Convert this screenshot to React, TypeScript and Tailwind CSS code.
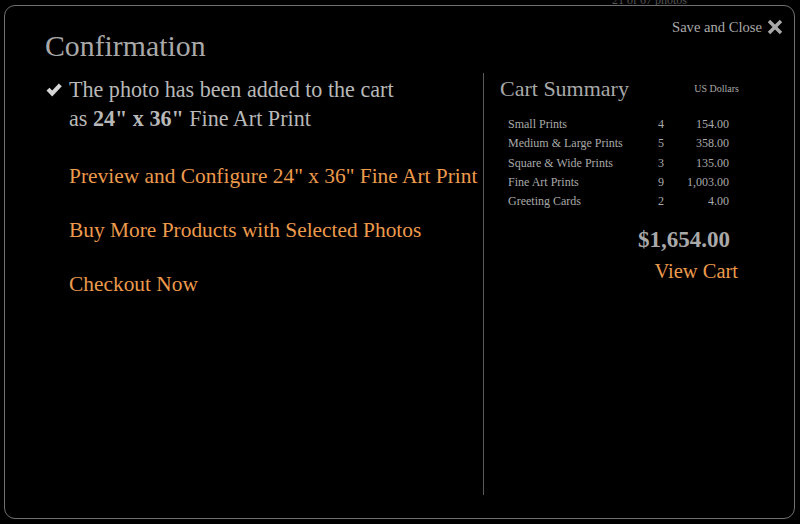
import React from "react";

const serif = { fontFamily: '"Liberation Serif", "DejaVu Serif", serif' };

const rows: [string, string, string][] = [
  ["Small Prints", "4", "154.00"],
  ["Medium & Large Prints", "5", "358.00"],
  ["Square & Wide Prints", "3", "135.00"],
  ["Fine Art Prints", "9", "1,003.00"],
  ["Greeting Cards", "2", "4.00"],
];

function Check() {
  return (
    <svg width="18" height="16" viewBox="0 0 18 16" className="shrink-0">
      <path d="M1.5 8.5 L4.5 5.8 L7.2 8.6 L13.8 1.5 L16.8 4.2 L7.2 14.5 Z" fill="#d6d6d6" />
    </svg>
  );
}

function CloseX() {
  return (
    <svg width="16" height="16" viewBox="0 0 16 16">
      <path
        d="M3.2 0.8 L8 5.6 L12.8 0.8 L15.2 3.2 L10.4 8 L15.2 12.8 L12.8 15.2 L8 10.4 L3.2 15.2 L0.8 12.8 L5.6 8 L0.8 3.2 Z"
        fill="#a8a8a8"
      />
    </svg>
  );
}

export default function App() {
  return (
    <div className="relative w-[800px] h-[524px] bg-black overflow-hidden" style={serif}>
      <div className="absolute left-[612px] top-[-9px] text-[12px] text-[#555]">21 of 67 photos</div>
      <div className="relative ml-[4px] mt-[5px] w-[791px] h-[514px] rounded-[11px] border border-[#707070] bg-black flex flex-col">
        <div className="flex justify-between items-start h-[67px]">
          <div className="ml-[40px] mt-[24px] text-[29.8px] leading-[32px] text-[#a9a9a9]">Confirmation</div>
          <div className="flex items-center gap-[5px] mt-[12px] mr-[11px]">
            <span className="text-[14.6px] leading-[18px] text-[#a9a9a9]">Save and Close</span>
            <CloseX />
          </div>
        </div>
        <div className="flex h-[422px]">
          <div className="w-[478px] pl-[40px] pt-[2px]">
            <div className="flex items-start gap-[6px]">
              <div className="mt-[7px]">
                <Check />
              </div>
              <div className="text-[22.1px] leading-[29px] text-[#b8b8b8]">
                <div>The photo has been added to the cart</div>
                <div>
                  as <span className="font-bold">24" x 36"</span> Fine Art Print
                </div>
              </div>
            </div>
            <div className="pl-[24px] mt-[29px] flex flex-col gap-[25px] text-[21.4px] leading-[29px] text-[#ec9a4c] whitespace-nowrap">
              <a>Preview and Configure 24" x 36" Fine Art Print</a>
              <a>Buy More Products with Selected Photos</a>
              <a>Checkout Now</a>
            </div>
          </div>
          <div className="border-l border-[#5a5a5a] pl-[16px] pt-[1px] w-[256px]">
            <div className="flex justify-between items-center h-[28px]">
              <span className="text-[22px] text-[#a9a9a9]">Cart Summary</span>
              <span className="text-[10px] text-[#a9a9a9]">US Dollars</span>
            </div>
            <div className="mt-[13px] pl-[8px] pr-[10px] text-[12px] leading-[19.3px] text-[#a9a9a9]">
              {rows.map(([l, q, a]) => (
                <div key={l} className="flex">
                  <span className="flex-1">{l}</span>
                  <span className="w-[40px] text-center">{q}</span>
                  <span className="w-[48px] text-right">{a}</span>
                </div>
              ))}
            </div>
            <div className="mt-[17px] pr-[9px] text-right text-[23px] leading-[24px] font-bold text-[#a9a9a9]">$1,654.00</div>
            <div className="mt-[6px] pr-[1px] text-right text-[20.5px] leading-[26px] text-[#ec9a4c]">View Cart</div>
          </div>
        </div>
      </div>
    </div>
  );
}
